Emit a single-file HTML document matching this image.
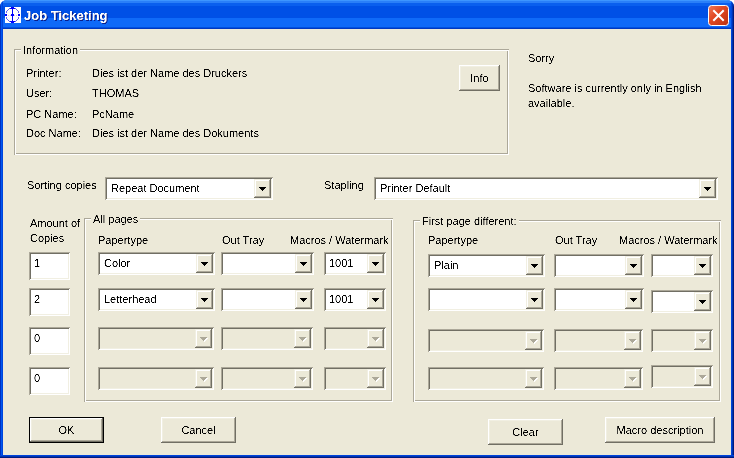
<!DOCTYPE html>
<html><head><meta charset="utf-8">
<style>
html,body{margin:0;padding:0;}
body{width:734px;height:458px;overflow:hidden;background:#fff;position:relative;font-family:"Liberation Sans",sans-serif;font-size:11px;line-height:13px;color:#000;}
.win{position:absolute;left:0;top:0;width:734px;height:458px;background:#0840d8;border-radius:7px 7px 0 0;overflow:hidden;}
.tb{position:absolute;left:0;top:0;width:734px;height:29px;
 background:linear-gradient(180deg,#3d95ff 0px,#3d95ff 1px,#2a7ff8 1px,#2a7ff8 3px,#0a5fee 3px,#0a5fee 6px,#0050e6 6px,#0050e6 18px,#0f6af8 18px,#0f6af8 27px,#0050e0 27px,#0050e0 28px,#0038c0 28px,#0038c0 29px);}
.frameL{position:absolute;left:0;top:0;width:3px;height:458px;background:linear-gradient(90deg,#0030c0 0,#0030c0 1px,#0058f0 1px,#0058f0 2px,#0044dc 2px);}
.frameR{position:absolute;left:731px;top:0;width:3px;height:458px;background:linear-gradient(90deg,#0044dc 0,#0044dc 1px,#0034b0 1px,#0034b0 2px,#001a80 2px);}
.frameB{position:absolute;left:0;top:455px;width:734px;height:3px;background:linear-gradient(180deg,#0044dc 0,#0044dc 1px,#0034b0 1px,#0034b0 2px,#001a80 2px);}
.content{position:absolute;left:3px;top:29px;width:728px;height:426px;background:#ece9d8;}
.a{position:absolute;}
.t{position:absolute;white-space:nowrap;filter:url(#crisp);}
.glab span,.btn span,.def span,.edit span,.cb span{filter:url(#crisp);}
.glab span{display:inline-block;}
.title{position:absolute;left:24px;top:8px;font-weight:bold;font-size:13px;line-height:15px;color:#fff;text-shadow:1px 1px #0a1e8c;white-space:nowrap;filter:url(#crisp);}
.grp{position:absolute;box-shadow:inset 1px 1px #aca899,inset -1px -1px #fff,inset 2px 2px #fff,inset -2px -2px #aca899;}
.glab{position:absolute;background:#ece9d8;padding:0 2px 0 2px;white-space:nowrap;}
.btn{position:absolute;background:#ece9d8;box-shadow:inset -1px -1px #716f64,inset 1px 1px #fff,inset -2px -2px #aca899,inset 2px 2px #f1efe2;text-align:center;}
.btn span{position:absolute;left:0;right:0;}
.def{position:absolute;background:#ece9d8;box-shadow:inset 1px 1px #000,inset -1px -1px #000,inset -2px -2px #716f64,inset 2px 2px #fff,inset -3px -3px #aca899,inset 3px 3px #f1efe2;text-align:center;}
.def span{position:absolute;left:0;right:0;}
.edit{position:absolute;width:41px;height:28px;background:#fff;box-shadow:inset 1px 1px #aca899,inset -1px -1px #fff,inset 2px 2px #716f64,inset -2px -2px #f1efe2;}
.edit span{position:absolute;left:5px;top:5px;}
.cb{position:absolute;height:23px;background:#fff;box-shadow:inset 1px 1px #aca899,inset -1px -1px #fff,inset 2px 2px #716f64,inset -2px -2px #f1efe2;}
.cb.dis{background:#ece9d8;}
.cb span{position:absolute;left:6px;top:5px;white-space:nowrap;}
.dd{position:absolute;right:2px;top:2px;width:17px;height:19px;background:#ece9d8;box-shadow:inset -1px -1px #716f64,inset 1px 1px #f1efe2,inset -2px -2px #aca899,inset 2px 2px #fff;}
.dd .ar{position:absolute;left:5px;top:8px;}
.dd .ar2{position:absolute;left:6px;top:9px;}
</style></head>
<body>
<svg width="0" height="0" style="position:absolute"><defs>
<filter id="crisp" x="0" y="0" width="100%" height="100%" color-interpolation-filters="sRGB"><feComponentTransfer><feFuncA type="linear" slope="3" intercept="-1"/></feComponentTransfer></filter>
<g id="arK" fill="#000" shape-rendering="crispEdges"><rect x="0" y="0" width="7" height="1"/><rect x="1" y="1" width="5" height="1"/><rect x="2" y="2" width="3" height="1"/><rect x="3" y="3" width="1" height="1"/></g>
<g id="arG" fill="#aca899" shape-rendering="crispEdges"><rect x="0" y="0" width="7" height="1"/><rect x="1" y="1" width="5" height="1"/><rect x="2" y="2" width="3" height="1"/><rect x="3" y="3" width="1" height="1"/></g>
<g id="arW" fill="#fff" shape-rendering="crispEdges"><rect x="0" y="0" width="7" height="1"/><rect x="1" y="1" width="5" height="1"/><rect x="2" y="2" width="3" height="1"/><rect x="3" y="3" width="1" height="1"/></g>
</defs></svg>
<div class="win">
 <div class="tb"></div>
 <div class="frameL"></div><div class="frameR"></div><div class="frameB"></div>
 <!-- icon -->
 <svg class="a" style="left:5px;top:7px" width="16" height="16" viewBox="0 0 16 16" shape-rendering="crispEdges"><rect x="0" y="0" width="16" height="16" fill="#fff"/><rect x="3" y="8" width="1" height="1" fill="#e0b8f0"/><rect x="5" y="8" width="1" height="1" fill="#e0b8f0"/><rect x="9" y="8" width="1" height="1" fill="#e0b8f0"/><rect x="11" y="8" width="1" height="1" fill="#e0b8f0"/><rect x="1" y="4" width="1" height="1" fill="#6464f0"/><rect x="1" y="5" width="1" height="1" fill="#6464f0"/><rect x="1" y="10" width="1" height="1" fill="#6464f0"/><rect x="1" y="11" width="1" height="1" fill="#6464f0"/><rect x="2" y="3" width="1" height="1" fill="#6464f0"/><rect x="2" y="12" width="1" height="1" fill="#6464f0"/><rect x="3" y="2" width="1" height="1" fill="#6464f0"/><rect x="3" y="13" width="1" height="1" fill="#6464f0"/><rect x="4" y="1" width="1" height="1" fill="#6464f0"/><rect x="4" y="14" width="1" height="1" fill="#6464f0"/><rect x="10" y="1" width="1" height="1" fill="#6464f0"/><rect x="10" y="14" width="1" height="1" fill="#6464f0"/><rect x="11" y="2" width="1" height="1" fill="#6464f0"/><rect x="11" y="13" width="1" height="1" fill="#6464f0"/><rect x="12" y="3" width="1" height="1" fill="#6464f0"/><rect x="12" y="12" width="1" height="1" fill="#6464f0"/><rect x="13" y="4" width="1" height="1" fill="#6464f0"/><rect x="13" y="5" width="1" height="1" fill="#6464f0"/><rect x="13" y="10" width="1" height="1" fill="#6464f0"/><rect x="13" y="11" width="1" height="1" fill="#6464f0"/><rect x="0" y="7" width="1" height="1" fill="#0000ff"/><rect x="0" y="8" width="1" height="1" fill="#0000ff"/><rect x="1" y="7" width="1" height="1" fill="#0000ff"/><rect x="1" y="8" width="1" height="1" fill="#0000ff"/><rect x="5" y="1" width="1" height="1" fill="#0000ff"/><rect x="5" y="14" width="1" height="1" fill="#0000ff"/><rect x="6" y="0" width="1" height="1" fill="#0000ff"/><rect x="6" y="1" width="1" height="1" fill="#0000ff"/><rect x="6" y="7" width="1" height="1" fill="#0000ff"/><rect x="6" y="8" width="1" height="1" fill="#0000ff"/><rect x="6" y="14" width="1" height="1" fill="#0000ff"/><rect x="6" y="15" width="1" height="1" fill="#0000ff"/><rect x="7" y="0" width="1" height="1" fill="#0000ff"/><rect x="7" y="1" width="1" height="1" fill="#0000ff"/><rect x="7" y="2" width="1" height="1" fill="#0000ff"/><rect x="7" y="3" width="1" height="1" fill="#0000ff"/><rect x="7" y="4" width="1" height="1" fill="#0000ff"/><rect x="7" y="5" width="1" height="1" fill="#0000ff"/><rect x="7" y="6" width="1" height="1" fill="#0000ff"/><rect x="7" y="7" width="1" height="1" fill="#0000ff"/><rect x="7" y="8" width="1" height="1" fill="#0000ff"/><rect x="7" y="9" width="1" height="1" fill="#0000ff"/><rect x="7" y="10" width="1" height="1" fill="#0000ff"/><rect x="7" y="11" width="1" height="1" fill="#0000ff"/><rect x="7" y="12" width="1" height="1" fill="#0000ff"/><rect x="7" y="13" width="1" height="1" fill="#0000ff"/><rect x="7" y="14" width="1" height="1" fill="#0000ff"/><rect x="7" y="15" width="1" height="1" fill="#0000ff"/><rect x="8" y="0" width="1" height="1" fill="#0000ff"/><rect x="8" y="1" width="1" height="1" fill="#0000ff"/><rect x="8" y="7" width="1" height="1" fill="#0000ff"/><rect x="8" y="8" width="1" height="1" fill="#0000ff"/><rect x="8" y="14" width="1" height="1" fill="#0000ff"/><rect x="8" y="15" width="1" height="1" fill="#0000ff"/><rect x="9" y="1" width="1" height="1" fill="#0000ff"/><rect x="9" y="14" width="1" height="1" fill="#0000ff"/><rect x="13" y="7" width="1" height="1" fill="#0000ff"/><rect x="13" y="8" width="1" height="1" fill="#0000ff"/><rect x="14" y="7" width="1" height="1" fill="#0000ff"/><rect x="14" y="8" width="1" height="1" fill="#0000ff"/></svg>
 <div class="title">Job Ticketing</div>
 <!-- close button -->
 <svg class="a" style="left:708px;top:5px" width="21" height="21" viewBox="0 0 21 21">
  <defs><linearGradient id="cg" x1="0" y1="0" x2="1" y2="1"><stop offset="0" stop-color="#f07a5a"/><stop offset="0.4" stop-color="#e24a24"/><stop offset="1" stop-color="#b83010"/></linearGradient></defs>
  <rect x="0.5" y="0.5" width="20" height="20" rx="3" ry="3" fill="url(#cg)" stroke="#fff" stroke-width="1"/>
  <path d="M6 6 L15 15 M15 6 L6 15" stroke="#fff" stroke-width="2" stroke-linecap="square"/>
 </svg>
 <div class="content"></div>
</div>

<!-- Information group -->
<div class="grp" style="left:14px;top:49px;width:495px;height:106px"></div>
<div class="glab" style="left:21px;top:44px"><span>Information</span></div>
<div class="t" style="left:26px;top:67px">Printer:</div>
<div class="t" style="left:26px;top:87px">User:</div>
<div class="t" style="left:26px;top:108px">PC Name:</div>
<div class="t" style="left:26px;top:127px">Doc Name:</div>
<div class="t" style="left:92px;top:67px">Dies ist der Name des Druckers</div>
<div class="t" style="left:92px;top:87px">THOMAS</div>
<div class="t" style="left:92px;top:108px">PcName</div>
<div class="t" style="left:92px;top:127px">Dies ist der Name des Dokuments</div>
<div class="btn" style="left:459px;top:65px;width:41px;height:26px"><span style="top:7px">Info</span></div>

<div class="t" style="left:528px;top:52px">Sorry</div>
<div class="t" style="left:528px;top:82px">Software is currently only in English</div>
<div class="t" style="left:528px;top:97px">available.</div>

<!-- sorting / stapling -->
<div class="t" style="left:27px;top:179px">Sorting copies</div>
<div class="cb" style="left:105px;top:177px;width:168px"><span>Repeat Document</span><div class="dd"><svg class="ar" width="7" height="4"><use href="#arK"/></svg></div></div>
<div class="t" style="left:324px;top:179px">Stapling</div>
<div class="cb" style="left:374px;top:177px;width:344px"><span>Printer Default</span><div class="dd"><svg class="ar" width="7" height="4"><use href="#arK"/></svg></div></div>

<!-- amount -->
<div class="t" style="left:30px;top:217px">Amount of</div>
<div class="t" style="left:30px;top:232px">Copies</div>
<div class="edit" style="left:29px;top:252px"><span>1</span></div>
<div class="edit" style="left:29px;top:288px"><span>2</span></div>
<div class="edit" style="left:29px;top:327px"><span>0</span></div>
<div class="edit" style="left:29px;top:367px"><span>0</span></div>

<!-- All pages -->
<div class="grp" style="left:84px;top:218px;width:309px;height:184px"></div>
<div class="glab" style="left:91px;top:213px"><span>All pages</span></div>
<div class="t" style="left:98px;top:234px">Papertype</div>
<div class="t" style="left:222px;top:234px">Out Tray</div>
<div class="t" style="left:290px;top:234px">Macros / Watermark</div>

<div class="cb" style="left:98px;top:252px;width:117px"><span>Color</span><div class="dd"><svg class="ar" width="7" height="4"><use href="#arK"/></svg></div></div>
<div class="cb" style="left:221px;top:252px;width:93px"><div class="dd"><svg class="ar" width="7" height="4"><use href="#arK"/></svg></div></div>
<div class="cb" style="left:324px;top:252px;width:62px"><span style="left:5px">1001</span><div class="dd"><svg class="ar" width="7" height="4"><use href="#arK"/></svg></div></div>

<div class="cb" style="left:98px;top:288px;width:117px"><span>Letterhead</span><div class="dd"><svg class="ar" width="7" height="4"><use href="#arK"/></svg></div></div>
<div class="cb" style="left:221px;top:288px;width:93px"><div class="dd"><svg class="ar" width="7" height="4"><use href="#arK"/></svg></div></div>
<div class="cb" style="left:324px;top:288px;width:62px"><span style="left:5px">1001</span><div class="dd"><svg class="ar" width="7" height="4"><use href="#arK"/></svg></div></div>

<div class="cb dis" style="left:98px;top:327px;width:116px"><div class="dd"><svg class="ar2" width="7" height="4"><use href="#arW"/></svg><svg class="ar" width="7" height="4"><use href="#arG"/></svg></div></div>
<div class="cb dis" style="left:221px;top:327px;width:92px"><div class="dd"><svg class="ar2" width="7" height="4"><use href="#arW"/></svg><svg class="ar" width="7" height="4"><use href="#arG"/></svg></div></div>
<div class="cb dis" style="left:324px;top:327px;width:62px"><div class="dd"><svg class="ar2" width="7" height="4"><use href="#arW"/></svg><svg class="ar" width="7" height="4"><use href="#arG"/></svg></div></div>

<div class="cb dis" style="left:98px;top:367px;width:116px"><div class="dd"><svg class="ar2" width="7" height="4"><use href="#arW"/></svg><svg class="ar" width="7" height="4"><use href="#arG"/></svg></div></div>
<div class="cb dis" style="left:221px;top:367px;width:92px"><div class="dd"><svg class="ar2" width="7" height="4"><use href="#arW"/></svg><svg class="ar" width="7" height="4"><use href="#arG"/></svg></div></div>
<div class="cb dis" style="left:324px;top:367px;width:62px"><div class="dd"><svg class="ar2" width="7" height="4"><use href="#arW"/></svg><svg class="ar" width="7" height="4"><use href="#arG"/></svg></div></div>

<!-- First page different -->
<div class="grp" style="left:413px;top:220px;width:308px;height:182px"></div>
<div class="glab" style="left:420px;top:215px"><span>First page different:</span></div>
<div class="t" style="left:428px;top:234px">Papertype</div>
<div class="t" style="left:555px;top:234px">Out Tray</div>
<div class="t" style="left:619px;top:234px">Macros / Watermark</div>

<div class="cb" style="left:428px;top:254px;width:117px"><span>Plain</span><div class="dd"><svg class="ar" width="7" height="4"><use href="#arK"/></svg></div></div>
<div class="cb" style="left:554px;top:254px;width:90px"><div class="dd"><svg class="ar" width="7" height="4"><use href="#arK"/></svg></div></div>
<div class="cb" style="left:651px;top:254px;width:62px"><div class="dd"><svg class="ar" width="7" height="4"><use href="#arK"/></svg></div></div>

<div class="cb" style="left:428px;top:288px;width:117px"><div class="dd"><svg class="ar" width="7" height="4"><use href="#arK"/></svg></div></div>
<div class="cb" style="left:554px;top:288px;width:90px"><div class="dd"><svg class="ar" width="7" height="4"><use href="#arK"/></svg></div></div>
<div class="cb" style="left:651px;top:290px;width:62px"><div class="dd"><svg class="ar" width="7" height="4"><use href="#arK"/></svg></div></div>

<div class="cb dis" style="left:428px;top:329px;width:116px"><div class="dd"><svg class="ar2" width="7" height="4"><use href="#arW"/></svg><svg class="ar" width="7" height="4"><use href="#arG"/></svg></div></div>
<div class="cb dis" style="left:554px;top:329px;width:89px"><div class="dd"><svg class="ar2" width="7" height="4"><use href="#arW"/></svg><svg class="ar" width="7" height="4"><use href="#arG"/></svg></div></div>
<div class="cb dis" style="left:651px;top:329px;width:62px"><div class="dd"><svg class="ar2" width="7" height="4"><use href="#arW"/></svg><svg class="ar" width="7" height="4"><use href="#arG"/></svg></div></div>

<div class="cb dis" style="left:428px;top:367px;width:116px"><div class="dd"><svg class="ar2" width="7" height="4"><use href="#arW"/></svg><svg class="ar" width="7" height="4"><use href="#arG"/></svg></div></div>
<div class="cb dis" style="left:554px;top:367px;width:89px"><div class="dd"><svg class="ar2" width="7" height="4"><use href="#arW"/></svg><svg class="ar" width="7" height="4"><use href="#arG"/></svg></div></div>
<div class="cb dis" style="left:651px;top:365px;width:62px"><div class="dd"><svg class="ar2" width="7" height="4"><use href="#arW"/></svg><svg class="ar" width="7" height="4"><use href="#arG"/></svg></div></div>

<!-- bottom buttons -->
<div class="def" style="left:29px;top:417px;width:75px;height:26px"><span style="top:7px">OK</span></div>
<div class="btn" style="left:161px;top:417px;width:75px;height:26px"><span style="top:7px">Cancel</span></div>
<div class="btn" style="left:488px;top:419px;width:75px;height:26px"><span style="top:7px">Clear</span></div>
<div class="btn" style="left:605px;top:417px;width:110px;height:26px"><span style="top:7px">Macro description</span></div>
</body></html>
